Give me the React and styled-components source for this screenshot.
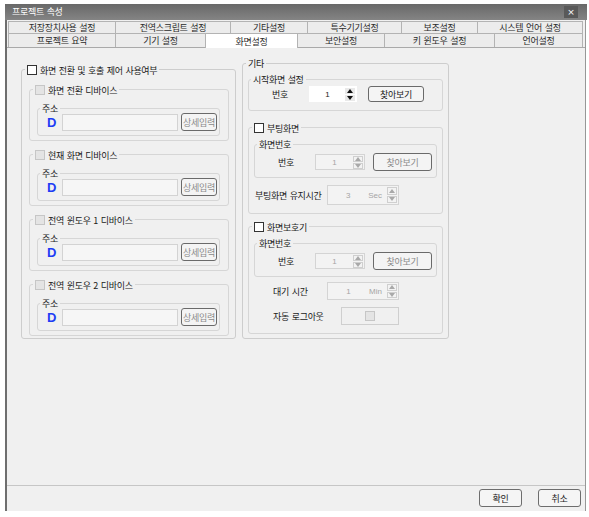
import React from 'react';
import styled, { createGlobalStyle } from 'styled-components';

const GlobalStyle = createGlobalStyle`
  html, body { margin: 0; padding: 0; background: #ffffff; }
  body {
    font-family: "Noto Sans CJK KR", "Noto Sans", sans-serif;
    font-size: 9px;
    letter-spacing: -0.3px;
    word-spacing: 1px;
    color: #1a1a1a;
  }
  * { box-sizing: border-box; }
`;

const Window = styled.div`
  margin: 4px 0 0 5px;
  width: 582px;
  display: flex;
  flex-direction: column;
`;

const TitleBar = styled.div`
  height: 16px;
  background: linear-gradient(#686868, #848484);
  display: flex;
  align-items: center;
  justify-content: space-between;
  padding: 0 9px 0 7px;
`;

const Title = styled.span`
  color: #ffffff;
  font-size: 9px;
  line-height: 16px;
`;

const CloseButton = styled.span`
  width: 14px;
  height: 12px;
  background: #595959;
  color: #ffffff;
  font-family: "DejaVu Sans", sans-serif;
  font-size: 9px;
  line-height: 12px;
  text-align: center;
  letter-spacing: 0;
`;

const Frame = styled.div`
  width: 581px;
  height: 491px;
  border-left: 2px solid #6e6e6e;
  border-right: 1px solid #979797;
  background: #f0f0f0;
  display: flex;
  flex-direction: column;
`;

const TabStrip = styled.div`
  padding: 1px 0 0 1px;
  display: flex;
  flex-direction: column;
`;

const TabRow = styled.div`
  display: flex;
  height: ${p => p.$h}px;
  margin-top: ${p => p.$mt || 0}px;
`;

const Tab = styled.div`
  width: ${p => p.$w}px;
  height: ${p => (p.$active ? p.$h + 1 : p.$h)}px;
  margin-left: -1px;
  &:first-child { margin-left: 0; }
  border: 1px solid #b3b3b3;
  border-bottom: ${p => (p.$last ? 'none' : '1px solid #b3b3b3')};
  background: ${p => (p.$active ? '#ffffff' : '#ececec')};
  z-index: ${p => (p.$active ? 2 : 1)};
  display: flex;
  align-items: center;
  justify-content: center;
  color: #2a2a2a;
  white-space: nowrap;
`;

const Panel = styled.div`
  height: 439px;
  border-top: 1px solid #a9a9a9;
  border-bottom: 1px solid #c6c6c6;
  padding: 15px 0 0 14px;
  display: grid;
  grid-template-columns: 215px 207px;
  column-gap: 6px;
  align-items: start;
`;

const Group = styled.div`
  border: 1px solid ${p => (p.$outer ? '#cdcdcd' : '#d6d6d6')};
  border-radius: 3px;
  margin-top: ${p => p.$mt || 0}px;
  display: flex;
  flex-direction: column;
`;

const Caption = styled.div`
  align-self: flex-start;
  display: flex;
  align-items: center;
  gap: 3px;
  height: ${p => p.$h || 10}px;
  margin: -6px 0 0 ${p => (p.$ml == null ? 3 : p.$ml)}px;
  padding: 0 2px;
  background: #f0f0f0;
  white-space: nowrap;
  color: #1a1a1a;
`;

const GroupBody = styled.div`
  padding: ${p => p.$pad};
  display: flex;
  flex-direction: column;
  gap: ${p => p.$gap || 0}px;
`;

const CheckBox = styled.span`
  display: inline-block;
  width: 10px;
  height: 10px;
  flex: none;
  border: 1px solid ${p => (p.$disabled ? '#c6c6c6' : '#333333')};
  background: ${p => (p.$disabled ? '#e4e4e4' : '#ffffff')};
`;

const Row = styled.div`
  display: flex;
  align-items: center;
  height: ${p => p.$h}px;
  margin-top: ${p => p.$mt || 0}px;
  padding-left: ${p => p.$pl || 0}px;
`;

const Label = styled.span`
  width: ${p => p.$w}px;
  flex: none;
  white-space: nowrap;
  color: #1a1a1a;
`;

const DeviceMark = styled.span`
  width: 15px;
  flex: none;
  font-family: "Liberation Sans", Arial, sans-serif;
  font-weight: bold;
  font-size: 13px;
  letter-spacing: 0;
  color: #1d3cf5;
`;

const TextBox = styled.div`
  width: ${p => p.$w}px;
  height: ${p => p.$h}px;
  flex: none;
  background: #f6f6f6;
  border: 1px solid #d3d3d3;
`;

const Button = styled.button`
  width: ${p => p.$w}px;
  height: ${p => p.$h}px;
  margin-left: ${p => p.$ml || 0}px;
  flex: none;
  padding: 0;
  border: 1px solid #6a6a6a;
  border-radius: 3px;
  background: #f4f4f4;
  font-family: inherit;
  font-size: 9px;
  letter-spacing: -0.3px;
  color: ${p => (p.$dim ? '#8a8a8a' : '#222222')};
  white-space: nowrap;
`;

const Spinner = styled.div`
  width: ${p => p.$w}px;
  height: ${p => p.$h}px;
  flex: none;
  display: flex;
  background: ${p => (p.$disabled ? '#f3f3f3' : '#ffffff')};
  border: 1px solid ${p => (p.$disabled ? '#d4d4d4' : '#ffffff')};
`;

const SpinValue = styled.div`
  flex: 1;
  display: flex;
  align-items: center;
  color: ${p => (p.$disabled ? '#a5a5a5' : '#222222')};
  font-family: "Liberation Sans", Arial, sans-serif;
  font-size: 8px;
  letter-spacing: 0;
`;

const SpinNumber = styled.span`
  flex: 1;
  text-align: center;
`;

const SpinUnit = styled.span`
  padding-right: 5px;
`;

const SpinButtons = styled.div`
  width: 11px;
  display: flex;
  flex-direction: column;
  gap: 1px;
  padding: 1px 1px 1px 0;
`;

const SpinArrow = styled.div`
  flex: 1;
  display: flex;
  align-items: center;
  justify-content: center;
  background: ${p => (p.$disabled ? '#f3f3f3' : '#e9e9e9')};
  border: 1px solid ${p => (p.$disabled ? '#cfcfcf' : '#e9e9e9')};
  &::after {
    content: '';
    border-left: 3px solid transparent;
    border-right: 3px solid transparent;
    ${p => (p.$down ? 'border-top' : 'border-bottom')}: 4px solid ${p => (p.$disabled ? '#a9a9a9' : '#111111')};
  }
`;

const LockBox = styled.div`
  width: ${p => p.$w}px;
  height: ${p => p.$h}px;
  flex: none;
  display: flex;
  align-items: center;
  justify-content: center;
  background: #f0f0f0;
  border: 1px solid #cfcfcf;
`;

const Footer = styled.div`
  flex: 1;
  display: flex;
  justify-content: flex-end;
  align-items: flex-start;
  gap: 16px;
  padding: 3px 4px 0 0;
`;

const FooterButton = styled.button`
  width: 43px;
  height: 18px;
  padding: 0;
  border: 1px solid #6d6d6d;
  border-radius: 3px;
  background: #f5f5f5;
  font-family: inherit;
  font-size: 9px;
  letter-spacing: -0.3px;
  color: #222222;
`;

const topTabs = [
  ['저장장치사용 설정', 108],
  ['전역스크립트 설정', 116],
  ['기타설정', 78],
  ['특수기기설정', 95],
  ['보조설정', 77],
  ['시스템 언어 설정', 106],
];

const bottomTabs = [
  ['프로젝트 요약', 108],
  ['기기 설정', 91],
  ['화면설정', 93, true],
  ['보안설정', 88],
  ['키 윈도우 설정', 111],
  ['언어설정', 89],
];

const devices = ['화면 전환 디바이스', '현재 화면 디바이스', '전역 윈도우 1 디바이스', '전역 윈도우 2 디바이스'];

function NumberSpinner({ w, h, value, unit, disabled }) {
  return (
    <Spinner $w={w} $h={h} $disabled={disabled}>
      <SpinValue $disabled={disabled}>
        <SpinNumber>{value}</SpinNumber>
        {unit && <SpinUnit>{unit}</SpinUnit>}
      </SpinValue>
      <SpinButtons>
        <SpinArrow $disabled={disabled} />
        <SpinArrow $disabled={disabled} $down />
      </SpinButtons>
    </Spinner>
  );
}

function DeviceGroup({ title }) {
  return (
    <Group>
      <Caption $h={12}>
        <CheckBox $disabled />
        {title}
      </Caption>
      <GroupBody $pad="12px 8px 4px 7px">
        <Group>
          <Caption $ml={2}>주소</Caption>
          <GroupBody $pad="0 0 4px 9px">
            <Row $h={18}>
              <DeviceMark>D</DeviceMark>
              <TextBox $w={116} $h={17} />
              <Button $w={36} $h={18} $ml={3} $dim>상세입력</Button>
            </Row>
          </GroupBody>
        </Group>
      </GroupBody>
    </Group>
  );
}

function ScreenNumberGroup() {
  return (
    <Group>
      <Caption $ml={2}>화면번호</Caption>
      <GroupBody $pad="4px 0 6px 23px">
        <Row $h={18}>
          <Label $w={37}>번호</Label>
          <NumberSpinner w={50} h={16} value="1" disabled />
          <Button $w={59} $h={18} $ml={8} $dim>찾아보기</Button>
        </Row>
      </GroupBody>
    </Group>
  );
}

export default function App() {
  return (
    <>
      <GlobalStyle />
      <Window>
        <TitleBar>
          <Title>프로젝트 속성</Title>
          <CloseButton>×</CloseButton>
        </TitleBar>
        <Frame>
          <TabStrip>
            <TabRow $h={13}>
              {topTabs.map(([t, w]) => (
                <Tab key={t} $w={w} $h={13}>{t}</Tab>
              ))}
            </TabRow>
            <TabRow $h={14} $mt={-1}>
              {bottomTabs.map(([t, w, active]) => (
                <Tab key={t} $w={w} $h={14} $active={active} $last>{t}</Tab>
              ))}
            </TabRow>
          </TabStrip>
          <Panel>
            <Group $outer $mt={6}>
              <Caption $h={12}>
                <CheckBox />
                화면 전환 및 호출 제어 사용여부
              </Caption>
              <GroupBody $pad="13px 6px 2px 7px" $gap={13}>
                {devices.map(d => (
                  <DeviceGroup key={d} title={d} />
                ))}
              </GroupBody>
            </Group>

            <Group $outer>
              <Caption>기타</Caption>
              <GroupBody $pad="11px 5px 4px 5px">
                <Group>
                  <Caption $ml={2}>시작화면 설정</Caption>
                  <GroupBody $pad="2px 0 8px 23px">
                    <Row $h={16}>
                      <Label $w={37}>번호</Label>
                      <NumberSpinner w={48} h={16} value="1" />
                      <Button $w={56} $h={16} $ml={11}>찾아보기</Button>
                    </Row>
                  </GroupBody>
                </Group>

                <Group $mt={16}>
                  <Caption $h={12}>
                    <CheckBox />
                    부팅화면
                  </Caption>
                  <GroupBody $pad="10px 5px 8px 5px">
                    <ScreenNumberGroup />
                    <Row $h={20} $mt={7} $pl={1}>
                      <Label $w={72}>부팅화면 유지시간</Label>
                      <NumberSpinner w={72} h={20} value="3" unit="Sec" disabled />
                    </Row>
                  </GroupBody>
                </Group>

                <Group $mt={12}>
                  <Caption $h={12}>
                    <CheckBox />
                    화면보호기
                  </Caption>
                  <GroupBody $pad="10px 5px 8px 5px">
                    <ScreenNumberGroup />
                    <Row $h={18} $mt={5} $pl={19}>
                      <Label $w={54}>대기 시간</Label>
                      <NumberSpinner w={72} h={18} value="1" unit="Min" disabled />
                    </Row>
                    <Row $h={18} $mt={7} $pl={19}>
                      <Label $w={68}>자동 로그아웃</Label>
                      <LockBox $w={58} $h={18}>
                        <CheckBox $disabled />
                      </LockBox>
                    </Row>
                  </GroupBody>
                </Group>
              </GroupBody>
            </Group>
          </Panel>
          <Footer>
            <FooterButton>확인</FooterButton>
            <FooterButton>취소</FooterButton>
          </Footer>
        </Frame>
      </Window>
    </>
  );
}
